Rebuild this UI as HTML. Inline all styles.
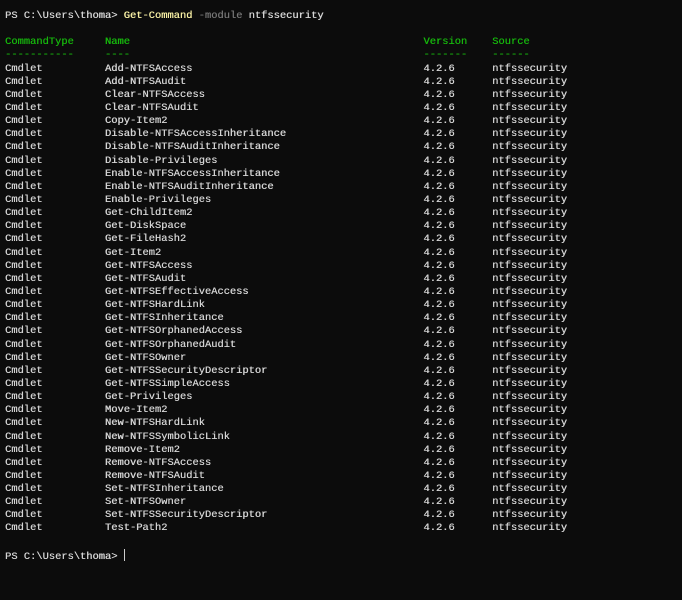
<!DOCTYPE html>
<html><head><meta charset="utf-8"><style>
html,body{margin:0;padding:0;background:#0c0c0c;width:682px;height:600px;overflow:hidden}
pre{margin:0;position:absolute;left:5px;top:10px;font-family:"Liberation Mono",monospace;font-size:10.42px;line-height:13.14px;color:#d4d4d4;white-space:pre;text-shadow:0.3px 0 0 currentColor}
.y{color:#f9f1a5}.g{color:#767676}.h{color:#16b60c}
.cur{display:inline-block;width:1px;height:12px;background:#cccccc;vertical-align:-2px}
</style></head><body><pre>PS C:\Users\thoma&gt; <span class="y">Get-Command</span> <span class="g">-module</span> ntfssecurity

<span class="h">CommandType     Name                                               Version    Source</span>
<span class="h">-----------     ----                                               -------    ------</span>
Cmdlet          Add-NTFSAccess                                     4.2.6      ntfssecurity
Cmdlet          Add-NTFSAudit                                      4.2.6      ntfssecurity
Cmdlet          Clear-NTFSAccess                                   4.2.6      ntfssecurity
Cmdlet          Clear-NTFSAudit                                    4.2.6      ntfssecurity
Cmdlet          Copy-Item2                                         4.2.6      ntfssecurity
Cmdlet          Disable-NTFSAccessInheritance                      4.2.6      ntfssecurity
Cmdlet          Disable-NTFSAuditInheritance                       4.2.6      ntfssecurity
Cmdlet          Disable-Privileges                                 4.2.6      ntfssecurity
Cmdlet          Enable-NTFSAccessInheritance                       4.2.6      ntfssecurity
Cmdlet          Enable-NTFSAuditInheritance                        4.2.6      ntfssecurity
Cmdlet          Enable-Privileges                                  4.2.6      ntfssecurity
Cmdlet          Get-ChildItem2                                     4.2.6      ntfssecurity
Cmdlet          Get-DiskSpace                                      4.2.6      ntfssecurity
Cmdlet          Get-FileHash2                                      4.2.6      ntfssecurity
Cmdlet          Get-Item2                                          4.2.6      ntfssecurity
Cmdlet          Get-NTFSAccess                                     4.2.6      ntfssecurity
Cmdlet          Get-NTFSAudit                                      4.2.6      ntfssecurity
Cmdlet          Get-NTFSEffectiveAccess                            4.2.6      ntfssecurity
Cmdlet          Get-NTFSHardLink                                   4.2.6      ntfssecurity
Cmdlet          Get-NTFSInheritance                                4.2.6      ntfssecurity
Cmdlet          Get-NTFSOrphanedAccess                             4.2.6      ntfssecurity
Cmdlet          Get-NTFSOrphanedAudit                              4.2.6      ntfssecurity
Cmdlet          Get-NTFSOwner                                      4.2.6      ntfssecurity
Cmdlet          Get-NTFSSecurityDescriptor                         4.2.6      ntfssecurity
Cmdlet          Get-NTFSSimpleAccess                               4.2.6      ntfssecurity
Cmdlet          Get-Privileges                                     4.2.6      ntfssecurity
Cmdlet          Move-Item2                                         4.2.6      ntfssecurity
Cmdlet          New-NTFSHardLink                                   4.2.6      ntfssecurity
Cmdlet          New-NTFSSymbolicLink                               4.2.6      ntfssecurity
Cmdlet          Remove-Item2                                       4.2.6      ntfssecurity
Cmdlet          Remove-NTFSAccess                                  4.2.6      ntfssecurity
Cmdlet          Remove-NTFSAudit                                   4.2.6      ntfssecurity
Cmdlet          Set-NTFSInheritance                                4.2.6      ntfssecurity
Cmdlet          Set-NTFSOwner                                      4.2.6      ntfssecurity
Cmdlet          Set-NTFSSecurityDescriptor                         4.2.6      ntfssecurity
Cmdlet          Test-Path2                                         4.2.6      ntfssecurity

PS C:\Users\thoma&gt; <span class="cur"></span></pre></body></html>
